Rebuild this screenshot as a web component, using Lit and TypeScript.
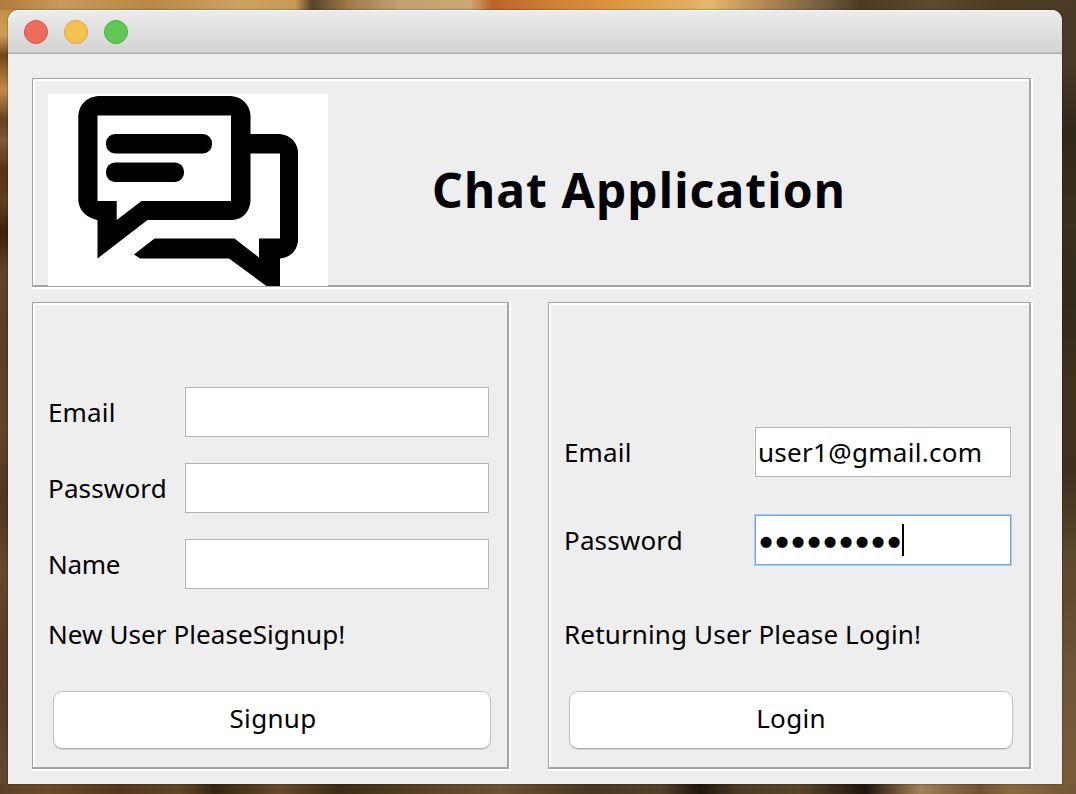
import { LitElement, html, css, svg } from "lit";
import { customElement, property } from "lit/decorators.js";

const chatIcon = svg`
  <path fill="#000" fill-rule="evenodd" d="M50 2H183C194 3 201.500 10 202.500 21V107C201.500 118 195 125 185 126H99.500L49.500 164.500V126C39 124 31.500 117 30.300 107V21C31.500 10 39 3 50 2ZM49.500 21.500V107H68.700V126L93.500 107H183V21.500Z"/>
  <rect x="58" y="40" width="106" height="19.500" rx="9"/>
  <rect x="58" y="68.500" width="78" height="19.500" rx="9"/>
  <path fill="#000" d="M202 40H232C242 41 249 48 250 57V147C249 157 242 163.500 232 164.500V202L181 164.500H92L86 160.500L106.500 144.500H186.500L211 163.500V144.500H232V59.500H202Z"/>`;

@customElement("etched-panel")
export class EtchedPanel extends LitElement {
  static styles = css`
    :host { display: flex; box-sizing: border-box; background: #fff; padding: 0 2px 2px 0; }
    .inner {
      flex: 1; box-sizing: border-box; min-width: 0;
      display: flex;
      border: 1px solid #a5a5a5; border-right-width: 2px; border-bottom-width: 2px;
      background: #eee; box-shadow: inset 2px 2px #fff;
    }
    ::slotted(*) { flex: 1; min-width: 0; }
  `;
  render() {
    return html`<div class="inner"><slot></slot></div>`;
  }
}

@customElement("text-field")
export class TextField extends LitElement {
  @property() value = "";
  @property({ type: Number }) masked = 0;
  static styles = css`
    :host {
      display: flex; align-items: center; box-sizing: border-box; height: 50px;
      border: 1px solid #b4b4b4; background: #fff; padding-left: 2px;
      box-shadow: 1px 0 #f4f4f4, -1px 0 #f4f4f4;
    }
    :host([focused]) { border-color: #6ea5e4; box-shadow: 0 0 0 1px #a9cdf5; }
    .value { letter-spacing: 0.3px; white-space: pre; }
    .dots { display: flex; padding-top: 2px; }
    .dot { width: 16px; text-align: center; font: 14.5px/32px "DejaVu Sans", sans-serif; }
    .caret { width: 2px; height: 32px; background: #000; }
  `;
  render() {
    return this.masked
      ? html`<div class="dots">${Array.from({ length: this.masked }, () => html`<span class="dot">●</span>`)}</div><div class="caret"></div>`
      : html`<span class="value">${this.value}</span>`;
  }
}

@customElement("app-root")
export class AppRoot extends LitElement {
  static styles = css`
    :host {
      display: block; box-sizing: border-box; height: 794px; padding: 10px 14px 10px 8px;
      font-family: "Noto Sans", sans-serif; font-size: 26px; color: #000;
      background:
        linear-gradient(90deg, #b27a3a 0, #c89a5c 60px, #b98848 150px, #cda263 240px, #c99a55 295px, #5a432a 312px, #a17b4c 350px, #c4a172 400px, #cba778 470px, #b9652a 492px, #cf7f34 550px, #dc973f 620px, #e4b66c 710px, #a87f52 775px, #766043 820px, #4c3a23 860px, #5c4930 930px, #4d3b23 1000px, #4b3b25 1076px) 0 0 / 100% 10px no-repeat,
        linear-gradient(90deg, #5b4026 0, #6b4b29 50px, #53381e 120px, #604629 180px, #38240f 215px, #654a2d 280px, #3f2a15 340px, #594027 420px, #6c5234 500px, #4b3521 590px, #55402a 660px, #20150b 700px, #4e3a25 740px, #5b442b 800px, #20150c 865px, #a18058 920px, #6f5130 980px, #8a693f 1010px, #725636 1076px) 0 100% / 100% 10px no-repeat,
        linear-gradient(180deg, #b98a45 0, #d19e55 35px, #75451a 55px, #c18b48 90px, #65431e 120px, #7c5a35 140px, #553416 170px, #604020 200px, #3d2209 232px, #60442a 270px, #5a3f24 340px, #604529 430px, #4d3520 500px, #66492c 570px, #563c24 650px, #59402a 720px, #634a31 794px) 0 0 / 20px 100% no-repeat,
        linear-gradient(180deg, #4b3b25 0, #4a3922 60px, #302817 130px, #3a301b 220px, #302b1a 300px, #403219 380px, #422f1b 470px, #5a462a 550px, #6b5335 660px, #7b5e3a 794px) 100% 0 / 26px 100% no-repeat;
    }
    .window {
      height: 774px; display: flex; flex-direction: column; background: #eee;
      border-radius: 10px 10px 0 0; overflow: hidden; box-shadow: 0 0 2px rgba(0, 0, 0, 0.6);
    }
    .titlebar {
      box-sizing: border-box; height: 44px; padding: 0 16px; display: flex; align-items: center; gap: 16px;
      background: linear-gradient(#ececec, #d3d3d3); border-bottom: 1px solid #adadad;
      box-shadow: inset 0 1px #f7f7f7, inset 0 -1px #c4c4c4; border-radius: 10px 10px 0 0;
    }
    .light { box-sizing: border-box; width: 24px; height: 24px; border-radius: 50%; border: 1px solid; }
    .close { background: #ee6b60; border-color: #d9524b; }
    .minimize { background: #f7c150; border-color: #dba448; }
    .zoom { background: #62c655; border-color: #4cae3d; }
    .content {
      flex: 1; padding: 24px 29px 0 24px; display: grid; align-content: start;
      grid-template: 211px 469px / 479px 485px; column-gap: 37px; row-gap: 13px;
    }
    .banner { grid-column: 1 / -1; }
    .masthead { display: flex; align-items: flex-start; padding: 15px 0 0 15px; height: 192px; }
    .logo { display: block; flex: none; background: #fff; width: 280px; height: 192px; }
    .title {
      margin: 62px 0 0 104px; font-size: 48px; line-height: 68px; font-weight: 700; letter-spacing: 1.1px; white-space: nowrap;
    }
    .form { display: flex; flex-direction: column; padding-left: 15px; }
    .signup { padding-top: 84px; padding-right: 18px; }
    .login { padding-top: 124px; padding-right: 18px; }
    .row { display: grid; align-items: center; height: 50px; }
    .signup .row { grid-template-columns: 137px 304px; margin-bottom: 26px; }
    .login .row { grid-template-columns: 191px 256px; margin-bottom: 38px; }
    .label, .note, .button { letter-spacing: 0.15px; white-space: nowrap; }
    .signup .row:nth-child(3) .label { letter-spacing: -0.3px; }
    .note { height: 36px; line-height: 36px; }
    .signup .note { margin-top: 1px; letter-spacing: 0.08px; }
    .login .note { margin-top: 13px; }
    .button {
      box-sizing: border-box; height: 58px; margin: 39px 0 0 5px; padding: 0 0 4px 2px; border: 1px solid #c3c3c3;
      border-bottom-color: #ababab; border-radius: 9px; background: #fff; color: inherit; font: inherit; letter-spacing: 0.3px;
      box-shadow: 0 1px 1px rgba(0, 0, 0, 0.12);
    }
    .signup .button { width: 438px; }
    .login .button { width: 444px; padding-left: 0; }
  `;
  private row(label: string, value = "") {
    return html`<div class="row"><span class="label">${label}</span><text-field .value=${value}></text-field></div>`;
  }
  render() {
    return html`
      <div class="window">
        <div class="titlebar">
          <span class="light close"></span><span class="light minimize"></span><span class="light zoom"></span>
        </div>
        <div class="content">
          <etched-panel class="banner">
            <div class="masthead">
              <svg class="logo" viewBox="0 0 280 192">${chatIcon}</svg>
              <div class="title">Chat Application</div>
            </div>
          </etched-panel>
          <etched-panel>
            <div class="form signup">
              ${this.row("Email")}${this.row("Password")}${this.row("Name")}
              <div class="note">New User PleaseSignup!</div>
              <button class="button">Signup</button>
            </div>
          </etched-panel>
          <etched-panel>
            <div class="form login">
              ${this.row("Email", "user1@gmail.com")}
              <div class="row"><span class="label">Password</span><text-field focused .masked=${9}></text-field></div>
              <div class="note">Returning User Please Login!</div>
              <button class="button">Login</button>
            </div>
          </etched-panel>
        </div>
      </div>`;
  }
}
